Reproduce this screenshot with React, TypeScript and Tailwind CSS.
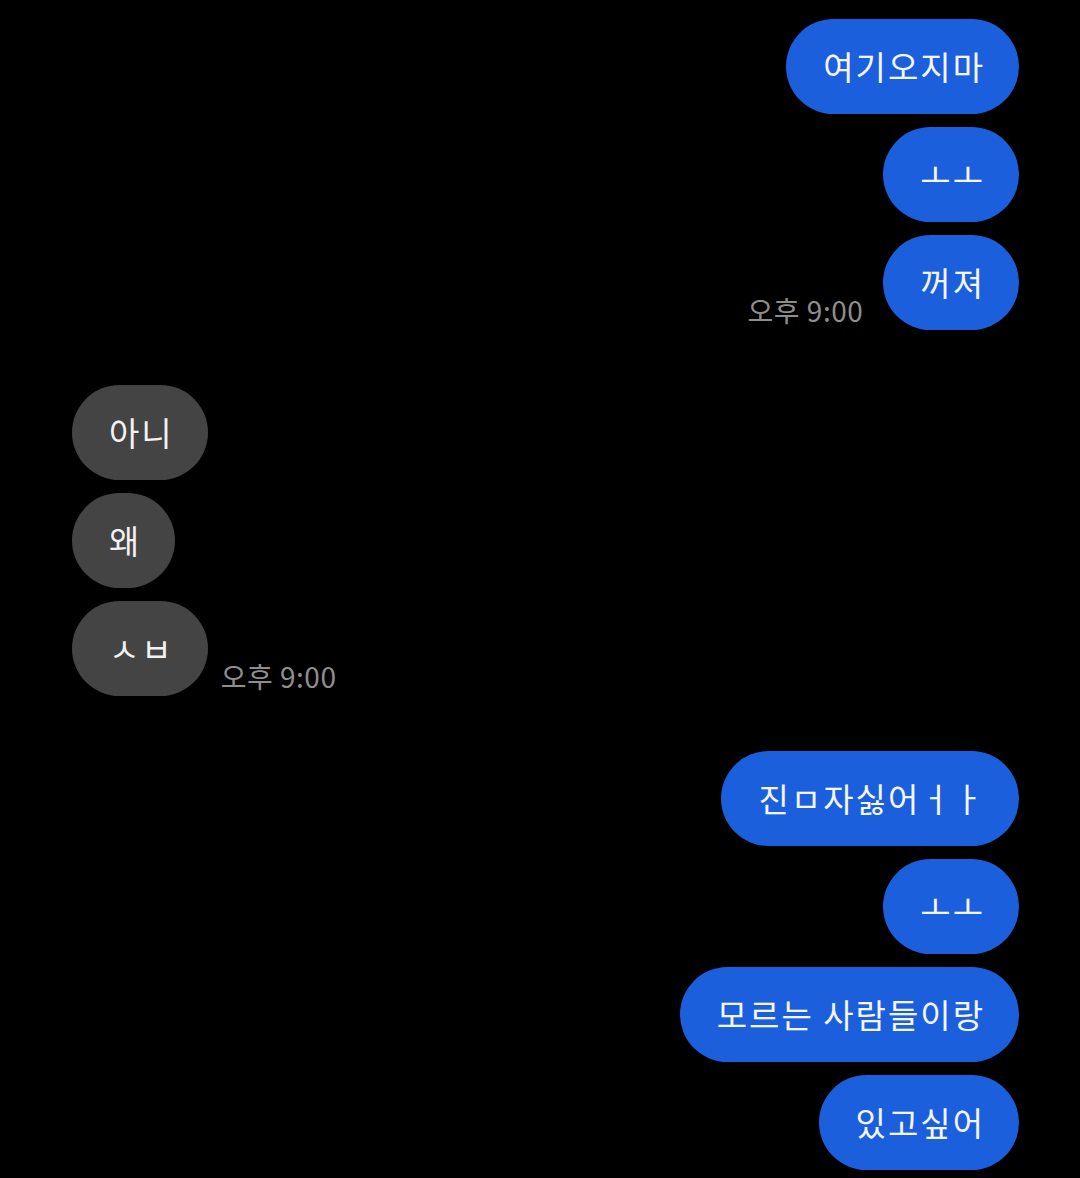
import React from "react";

const font = { fontFamily: '"Noto Sans CJK KR", "Noto Sans", sans-serif' };

function Out({ text }: { text: string }) {
  return (
    <div className="h-[95px] rounded-full bg-[#1b5fdc] pl-[37px] pr-[34px] flex items-center text-[33px] tracking-[2px] text-[#f4f6fb] leading-none whitespace-nowrap">
      {text}
    </div>
  );
}

function In({ text }: { text: string }) {
  return (
    <div className="h-[95px] rounded-full bg-[#444444] pl-[37px] pr-[34px] flex items-center text-[33px] tracking-[2px] text-[#f2f2f2] leading-none whitespace-nowrap">
      {text}
    </div>
  );
}

function Time() {
  return <span className="text-[28px] tracking-[0.5px] text-[#8e8e8e] leading-none whitespace-nowrap mb-[6px]">오후 9:00</span>;
}

export default function App() {
  return (
    <div className="w-[1080px] h-[1178px] bg-black overflow-hidden pt-[19px] pl-[72px] pr-[61px] flex flex-col" style={font}>
      <div className="flex flex-col items-end gap-[13px]">
        <Out text="여기오지마" />
        <Out text="ㅗㅗ" />
        <div className="flex items-end gap-[20px]">
          <Time />
          <Out text="꺼져" />
        </div>
      </div>
      <div className="flex flex-col items-start gap-[13px] mt-[55px]">
        <In text="아니" />
        <In text="왜" />
        <div className="flex items-end gap-[13px]">
          <In text="ㅅㅂ" />
          <Time />
        </div>
      </div>
      <div className="flex flex-col items-end gap-[13px] mt-[55px]">
        <Out text="진ㅁ자싫어ㅓㅏ" />
        <Out text="ㅗㅗ" />
        <Out text="모르는 사람들이랑" />
        <Out text="있고싶어" />
      </div>
    </div>
  );
}
